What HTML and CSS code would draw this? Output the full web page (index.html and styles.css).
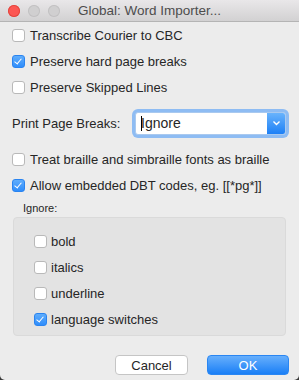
FILE: index.html
```html
<!DOCTYPE html>
<html lang="en">
<head>
    <meta charset="UTF-8">
    <title>Global: Word Importer...</title>
    <link rel="stylesheet" href="styles.css">
</head>
<body>

<div class="window">
    <!-- Title bar -->
    <div class="titlebar">
        <div class="lights">
            <span class="light close"></span>
            <span class="light"></span>
            <span class="light"></span>
        </div>
        <div class="title">Global: Word Importer...</div>
    </div>

    <div class="content">
        <label class="row"><span class="box"></span>Transcribe Courier to CBC</label>
        <label class="row"><span class="box checked"></span>Preserve hard page breaks</label>
        <label class="row"><span class="box"></span>Preserve Skipped Lines</label>

        <div class="select-row">
            <span class="select-label">Print Page Breaks:</span>
            <div class="combo">
                <span class="caret"></span><span class="combo-text">Ignore</span>
                <span class="combo-btn">
                    <svg width="9" height="6" viewBox="0 0 9 6"><path d="M1.5 1.5 L4.5 4.5 L7.5 1.5" fill="none" stroke="#fff" stroke-width="1.4"/></svg>
                </span>
            </div>
        </div>

        <label class="row"><span class="box"></span>Treat braille and simbraille fonts as braille</label>
        <label class="row"><span class="box checked"></span>Allow embedded DBT codes, eg. [[*pg*]]</label>

        <div class="group-title">Ignore:</div>
        <div class="group">
            <label class="row"><span class="box"></span>bold</label>
            <label class="row"><span class="box"></span>italics</label>
            <label class="row"><span class="box"></span>underline</label>
            <label class="row"><span class="box checked"></span>language switches</label>
        </div>
    </div>

    <div class="buttons">
        <button class="btn cancel" type="button">Cancel</button>
        <button class="btn ok" type="button">OK</button>
    </div>
</div>

</body>
</html>
```

FILE: styles.css
```css
html, body {
    margin: 0;
    padding: 0;
}

body {
    background-color: #3a3a3a;
    font-family: 'Liberation Sans', Arial, sans-serif;
    color: #262626;
}

.window {
    width: 299px;
    height: 380px;
    background-color: #ececec;
    border-radius: 0 0 5px 5px;
    display: flex;
    flex-direction: column;
    overflow: hidden;
}

/* Title bar */
.titlebar {
    height: 21px;
    background: linear-gradient(#e9e7e9, #d2d1d2);
    border-bottom: 1px solid #b4b4b4;
    display: flex;
    align-items: center;
    position: relative;
}

.lights {
    display: flex;
    gap: 8px;
    padding-left: 8px;
}

.light {
    width: 12px;
    height: 12px;
    border-radius: 50%;
    background-color: #d0cfd0;
    box-shadow: inset 0 0 0 1px #c2c1c2;
}

.light.close {
    background-color: #fc5753;
    box-shadow: inset 0 0 0 1px #e2463f;
}

.title {
    position: absolute;
    left: 0;
    right: 0;
    text-align: center;
    font-size: 13.5px;
    color: #4d4d4d;
}

/* Main content */
.content {
    padding: 0 12px;
    display: flex;
    flex-direction: column;
}

.row {
    height: 26px;
    display: flex;
    align-items: center;
    font-size: 13px;
    white-space: nowrap;
}

.box {
    width: 11px;
    height: 11px;
    border: 1px solid #b9b9b9;
    border-radius: 3px;
    background-color: #fff;
    margin-right: 5px;
    flex-shrink: 0;
    position: relative;
}

.box.checked {
    background: linear-gradient(#5fadfc, #2f8dfb);
    border-color: #2a84f0;
}

.box.checked::after {
    content: "";
    position: absolute;
    left: 3px;
    top: 1px;
    width: 3px;
    height: 6px;
    border: solid #fff;
    border-width: 0 1.5px 1.5px 0;
    transform: rotate(40deg);
}

/* Select row */
.select-row {
    height: 46px;
    display: flex;
    align-items: center;
    font-size: 13px;
}

.select-label {
    width: 123px;
}

.combo {
    width: 149px;
    height: 21px;
    background-color: #fff;
    border: 1px solid #a9c9ef;
    border-radius: 3px;
    box-shadow: 0 0 0 3px #8ebcf3;
    display: flex;
    align-items: center;
    position: relative;
    font-size: 14px;
}

.caret {
    width: 1px;
    height: 15px;
    background-color: #000;
    margin-left: 5px;
}

.combo-text {
    flex: 1;
    margin-left: -1px;
}

.combo-btn {
    width: 18px;
    height: 21px;
    background: linear-gradient(#69b3fc, #1d80f6);
    border-radius: 0 2px 2px 0;
    display: flex;
    align-items: center;
    justify-content: center;
}

/* Ignore group */
.group-title {
    font-size: 11px;
    padding-left: 11px;
    height: 19px;
    display: flex;
    align-items: center;
}

.group {
    margin: 0 1px;
    padding: 10px 20px 3px;
    background-color: #e3e3e3;
    border: 1px solid #dadada;
    border-radius: 4px;
}

.group .box {
    margin-right: 4px;
}

/* Buttons */
.buttons {
    margin-top: auto;
    padding: 0 10px 5px 0;
    display: flex;
    justify-content: flex-end;
    gap: 19px;
}

.btn {
    height: 20px;
    font-family: 'Liberation Sans', Arial, sans-serif;
    font-size: 13px;
    border-radius: 4px;
    padding: 0;
}

.cancel {
    width: 73px;
    background-color: #fff;
    border: 1px solid #c5c5c5;
    color: #262626;
}

.ok {
    width: 82px;
    background: linear-gradient(#67affc, #1a7ff6);
    border: 1px solid #2a86f2;
    color: #fff;
}
```
